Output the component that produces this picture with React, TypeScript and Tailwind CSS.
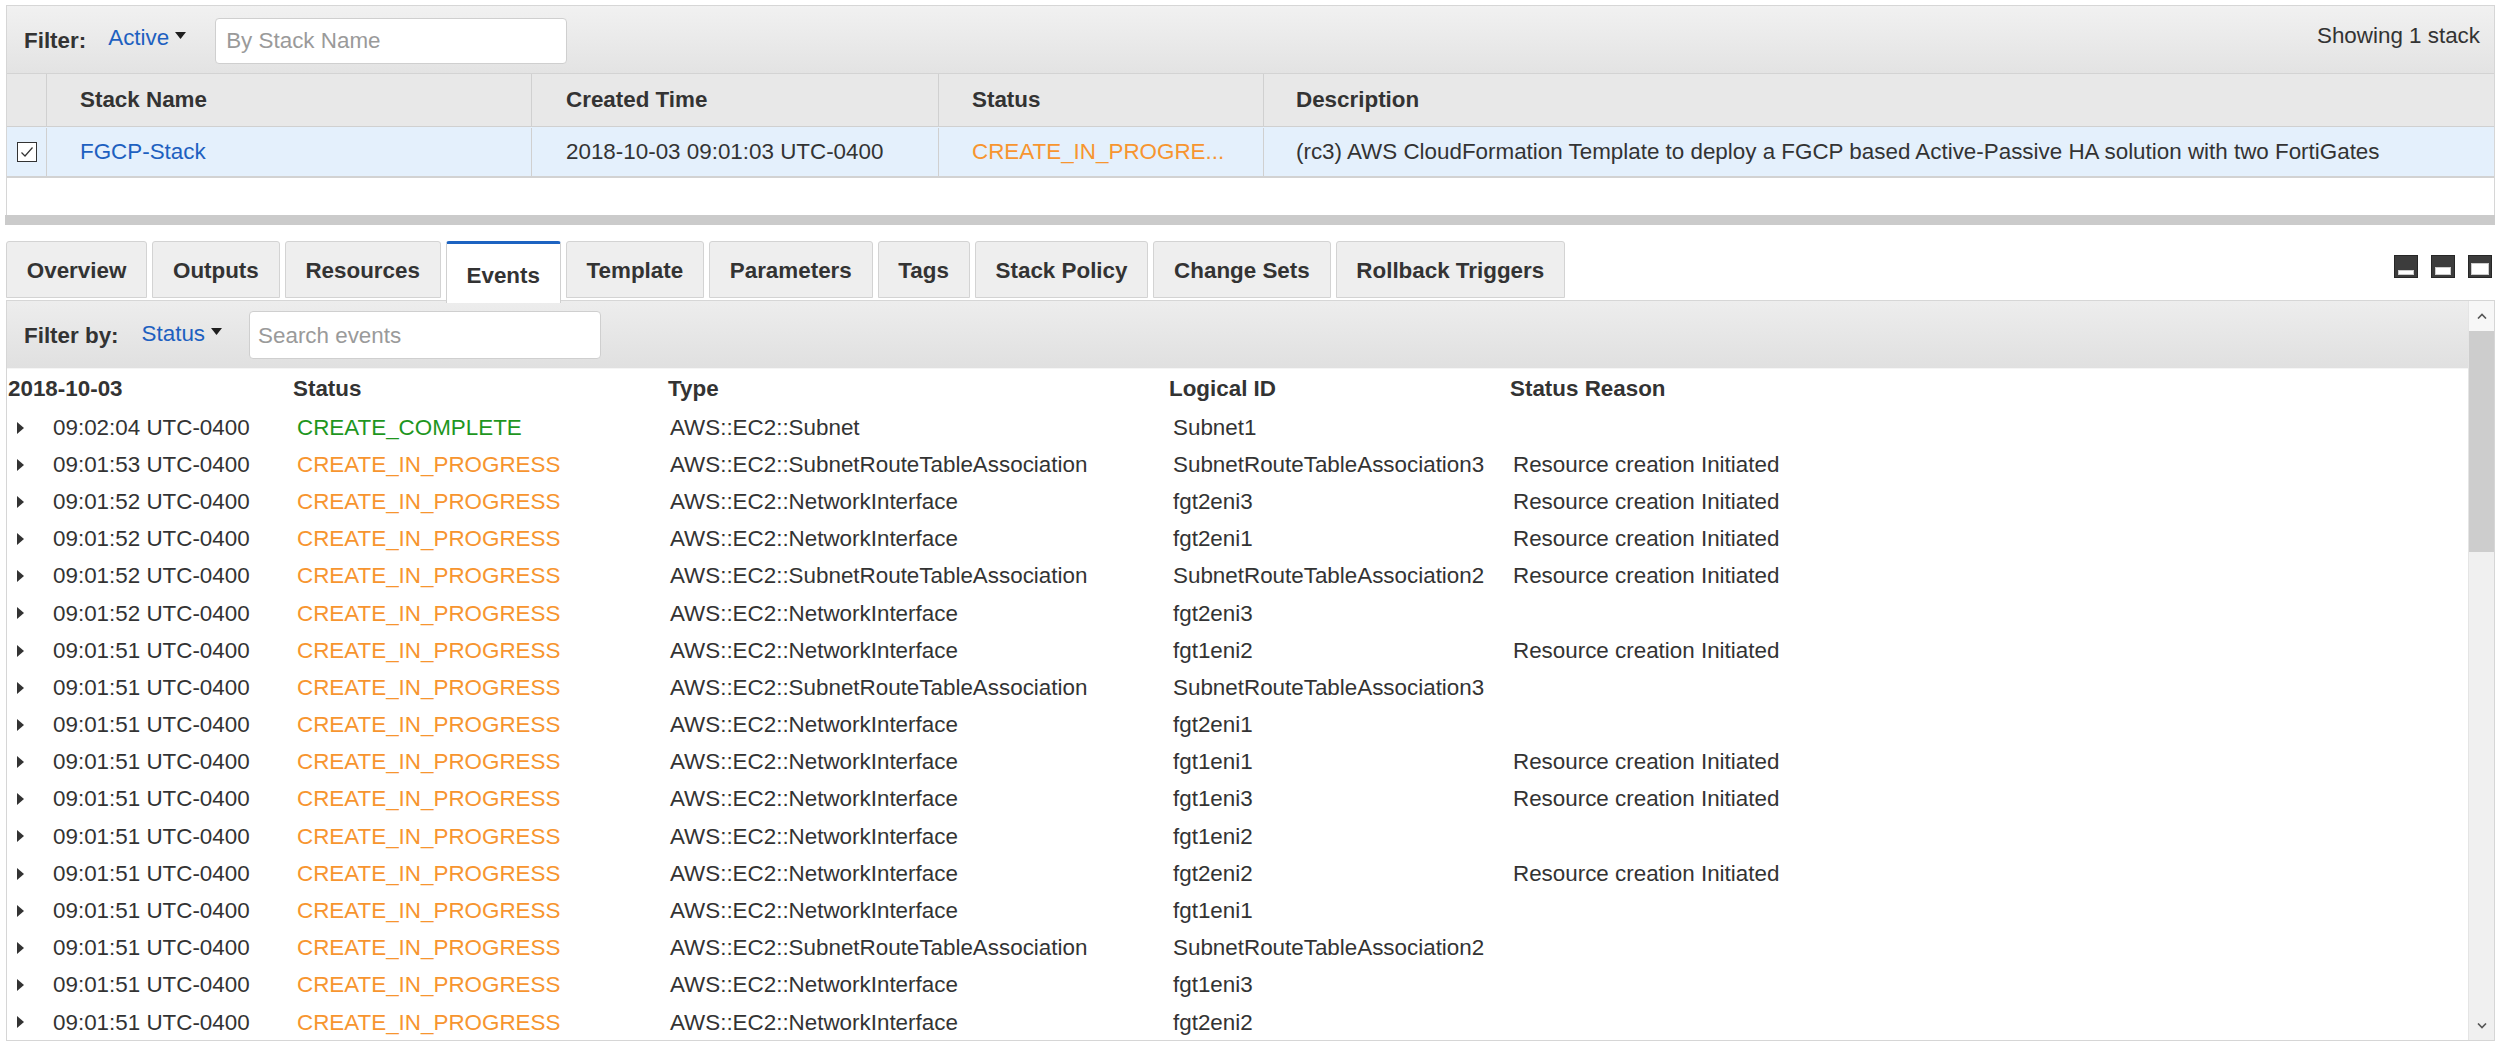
import React from 'react';

type EventRow = {
  time: string;
  status: string;
  type: string;
  logicalId: string;
  reason: string;
};

const IP = 'CREATE_IN_PROGRESS';
const NI = 'AWS::EC2::NetworkInterface';
const SRTA = 'AWS::EC2::SubnetRouteTableAssociation';
const INIT = 'Resource creation Initiated';

const events: EventRow[] = [
  { time: '09:02:04 UTC-0400', status: 'CREATE_COMPLETE', type: 'AWS::EC2::Subnet', logicalId: 'Subnet1', reason: '' },
  { time: '09:01:53 UTC-0400', status: IP, type: SRTA, logicalId: 'SubnetRouteTableAssociation3', reason: INIT },
  { time: '09:01:52 UTC-0400', status: IP, type: NI, logicalId: 'fgt2eni3', reason: INIT },
  { time: '09:01:52 UTC-0400', status: IP, type: NI, logicalId: 'fgt2eni1', reason: INIT },
  { time: '09:01:52 UTC-0400', status: IP, type: SRTA, logicalId: 'SubnetRouteTableAssociation2', reason: INIT },
  { time: '09:01:52 UTC-0400', status: IP, type: NI, logicalId: 'fgt2eni3', reason: '' },
  { time: '09:01:51 UTC-0400', status: IP, type: NI, logicalId: 'fgt1eni2', reason: INIT },
  { time: '09:01:51 UTC-0400', status: IP, type: SRTA, logicalId: 'SubnetRouteTableAssociation3', reason: '' },
  { time: '09:01:51 UTC-0400', status: IP, type: NI, logicalId: 'fgt2eni1', reason: '' },
  { time: '09:01:51 UTC-0400', status: IP, type: NI, logicalId: 'fgt1eni1', reason: INIT },
  { time: '09:01:51 UTC-0400', status: IP, type: NI, logicalId: 'fgt1eni3', reason: INIT },
  { time: '09:01:51 UTC-0400', status: IP, type: NI, logicalId: 'fgt1eni2', reason: '' },
  { time: '09:01:51 UTC-0400', status: IP, type: NI, logicalId: 'fgt2eni2', reason: INIT },
  { time: '09:01:51 UTC-0400', status: IP, type: NI, logicalId: 'fgt1eni1', reason: '' },
  { time: '09:01:51 UTC-0400', status: IP, type: SRTA, logicalId: 'SubnetRouteTableAssociation2', reason: '' },
  { time: '09:01:51 UTC-0400', status: IP, type: NI, logicalId: 'fgt1eni3', reason: '' },
  { time: '09:01:51 UTC-0400', status: IP, type: NI, logicalId: 'fgt2eni2', reason: '' },
];

const tabs = [
  'Overview',
  'Outputs',
  'Resources',
  'Events',
  'Template',
  'Parameters',
  'Tags',
  'Stack Policy',
  'Change Sets',
  'Rollback Triggers',
];

const DropCaret = () => (
  <svg width="11" height="7" viewBox="0 0 11 7" className="ml-[6px] mb-[4px]">
    <path d="M0 0H11L5.5 7Z" fill="#1f1f1f" />
  </svg>
);

const RowCaret = () => (
  <svg width="7" height="12" viewBox="0 0 7 12">
    <path d="M0 0L7 6L0 12Z" fill="#333" />
  </svg>
);

// the three little "panel size" buttons on the right of the tab strip
const PanelIcon = ({ bar }: { bar: 'sm' | 'md' | 'lg' }) => (
  <div className="w-[24px] h-[23px] bg-[#3c3c3c] border border-[#262626] flex items-end justify-center pb-[2px]">
    <div
      className={
        bar === 'sm'
          ? 'w-[16px] h-[5px] bg-white border border-[#ccc]'
          : bar === 'md'
          ? 'w-[16px] h-[8px] bg-white border border-[#ccc]'
          : 'w-[18px] h-[12px] bg-white border border-[#ccc]'
      }
    />
  </div>
);

const App = () => {
  return (
    <div className="w-[2500px] h-[1046px] bg-white pl-[6px] pr-[5px] pt-[5px] font-['Liberation_Sans',Arial,sans-serif] text-[22.4px] text-[#333] overflow-hidden">
      {/* stack list */}
      <div className="border-x border-t border-[#d6d6d6]">
        {/* filter bar */}
        <div className="h-[68px] bg-gradient-to-b from-[#f1f1f1] to-[#e3e3e3] border-b border-[#d3d3d3] flex items-center pl-[17px] pr-[14px] pt-[3px]">
          <span className="font-bold">Filter:</span>
          <span className="ml-[22px] mb-[6px] flex items-center text-[#1d60c0]">
            Active
            <DropCaret />
          </span>
          <div className="ml-[29px] w-[352px] h-[46px] bg-white border border-[#cfcfcf] rounded-[4px] flex items-center pl-[10px] text-[#9a9a9a]">
            By Stack Name
          </div>
          <span className="ml-auto self-start mt-[10px]">Showing 1 stack</span>
        </div>
        {/* header */}
        <div className="h-[53px] bg-[#e8e8e8] border-b border-[#d0d0d0] grid grid-cols-[40px_485px_407px_325px_1fr] font-bold">
          <div className="border-r border-[#d0d0d0]" />
          <div className="border-r border-[#d0d0d0] flex items-center pl-[33px]">Stack Name</div>
          <div className="border-r border-[#d0d0d0] flex items-center pl-[34px]">Created Time</div>
          <div className="border-r border-[#d0d0d0] flex items-center pl-[33px]">Status</div>
          <div className="flex items-center pl-[32px]">Description</div>
        </div>
        {/* selected stack */}
        <div className="h-[51px] bg-[#e4f0fc] border-b-2 border-[#d2d2d2] grid grid-cols-[40px_485px_407px_325px_1fr] pt-[1px]">
          <div className="border-r border-[#d0d0d0] flex items-center justify-center">
            <svg width="20" height="20" viewBox="0 0 20 20">
              <rect x="0.5" y="0.5" width="19" height="19" fill="#fff" stroke="#333" />
              <path d="M4.5 10.5L8 14L15.5 5.5" fill="none" stroke="#333" strokeWidth="1.2" />
            </svg>
          </div>
          <div className="border-r border-[#d0d0d0] flex items-center pl-[33px] text-[#1d60c0]">FGCP-Stack</div>
          <div className="border-r border-[#d0d0d0] flex items-center pl-[34px]">2018-10-03 09:01:03 UTC-0400</div>
          <div className="border-r border-[#d0d0d0] flex items-center pl-[33px] text-[#f7952f]">CREATE_IN_PROGRE...</div>
          <div className="flex items-center pl-[32px]">
            (rc3) AWS CloudFormation Template to deploy a FGCP based Active-Passive HA solution with two FortiGates
          </div>
        </div>
        <div className="h-[37px] bg-white" />
      </div>
      <div className="h-[10px] bg-[#cbcbcb] -ml-[1px]" />

      {/* tabs */}
      <div className="mt-[16px] h-[59px] flex items-start">
        <div className="flex gap-[5px] items-start">
          {tabs.map((t) =>
            t === 'Events' ? (
              <div
                key={t}
                className="relative z-10 h-[62px] px-[19.8px] bg-white border-x border-[#d0d0d0] border-t-[3px] border-t-[#1d63c1] rounded-t-[3px] flex items-center pt-[5px] font-bold"
              >
                {t}
              </div>
            ) : (
              <div
                key={t}
                className="h-[57px] px-[19.8px] bg-[#eeeeee] border border-[#d3d3d3] rounded-t-[3px] flex items-center pt-[2px] font-bold"
              >
                {t}
              </div>
            )
          )}
        </div>
        <div className="ml-auto mt-[14px] mr-[3px] flex gap-[13px]">
          <PanelIcon bar="sm" />
          <PanelIcon bar="md" />
          <PanelIcon bar="lg" />
        </div>
      </div>

      {/* events panel */}
      <div className="h-[741px] border border-[#d6d6d6] flex">
        <div className="flex-1 flex flex-col">
          <div className="h-[68px] bg-gradient-to-b from-[#ededed] to-[#e0e0e0] border-b border-[#f5f5f5] flex items-center pl-[17px] pt-[2px]">
            <span className="font-bold">Filter by:</span>
            <span className="ml-[23px] mb-[3px] flex items-center text-[#1d60c0]">
              Status
              <DropCaret />
            </span>
            <div className="ml-[27px] w-[352px] h-[48px] bg-white border border-[#cfcfcf] rounded-[4px] flex items-center pl-[8px] text-[#9a9a9a]">
              Search events
            </div>
          </div>
          <div className="h-[39px] grid grid-cols-[286px_375px_501px_341px_1fr] items-center font-bold pt-[1px]">
            <div className="pl-[1px]">2018-10-03</div>
            <div>Status</div>
            <div>Type</div>
            <div>Logical ID</div>
            <div>Status Reason</div>
          </div>
          {events.map((e, i) => (
            <div key={i} className="h-[37.2px] grid grid-cols-[286px_375px_501px_341px_1fr] items-center pt-[2px]">
              <div className="flex items-center pl-[10px]">
                <RowCaret />
                <span className="ml-[29px]">{e.time}</span>
              </div>
              <div className={`pl-[4px] ${e.status === 'CREATE_COMPLETE' ? 'text-[#1e961e]' : 'text-[#f7952f]'}`}>
                {e.status}
              </div>
              <div className="pl-[2px]">{e.type}</div>
              <div className="pl-[4px]">{e.logicalId}</div>
              <div className="pl-[3px]">{e.reason}</div>
            </div>
          ))}
        </div>
        {/* scrollbar */}
        <div className="w-[26px] bg-[#f0f0f0] border-l border-[#e4e4e4] flex flex-col">
          <div className="h-[30px] bg-[#f7f7f7] flex items-center justify-center">
            <svg width="10" height="6" viewBox="0 0 10 6">
              <path d="M1 5.5L5 1.5L9 5.5" fill="none" stroke="#555" strokeWidth="1.6" />
            </svg>
          </div>
          <div className="h-[221px] bg-[#cdcdcd]" />
          <div className="flex-1" />
          <div className="h-[28px] flex items-center justify-center">
            <svg width="10" height="6" viewBox="0 0 10 6">
              <path d="M1 0.5L5 4.5L9 0.5" fill="none" stroke="#555" strokeWidth="1.6" />
            </svg>
          </div>
        </div>
      </div>
    </div>
  );
};

export default App;
